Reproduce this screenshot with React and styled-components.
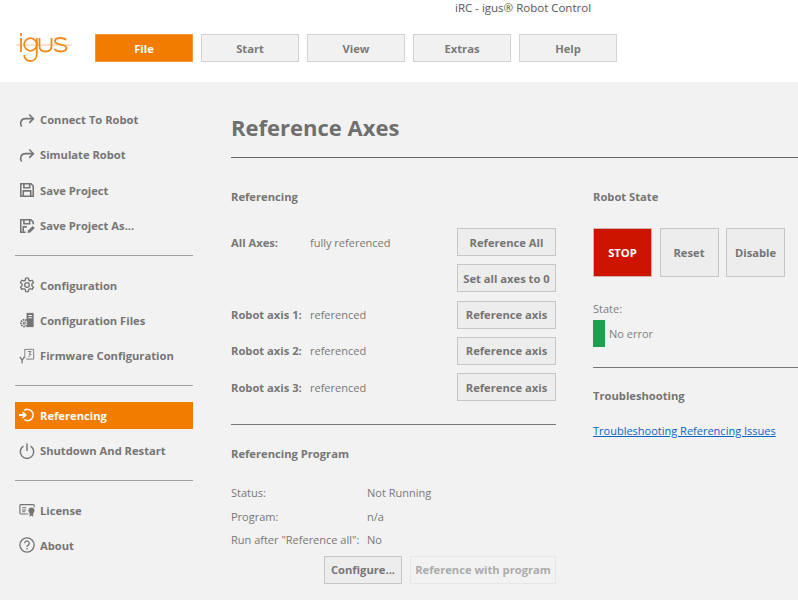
import React from "react"
import styled, { createGlobalStyle } from "styled-components"

const GlobalStyle = createGlobalStyle`
  html, body {
    margin: 0;
    padding: 0;
    height: 100%;
    overflow: hidden;
    background: #f2f2f2;
    font-family: "Open Sans", "Noto Sans", sans-serif;
  }
  * { box-sizing: border-box; }
`

const Page = styled.div`
  width: 798px;
  height: 600px;
  overflow: hidden;
  display: flex;
  flex-direction: column;
`

const Header = styled.header`
  height: 82px;
  flex: none;
  background: #fff;
  display: flex;
  flex-direction: column;
`

const AppTitle = styled.div`
  height: 32px;
  padding: 0 0 0 455px;
  font-size: 11.5px;
  line-height: 15px;
  color: #555;
`

const TabRow = styled.div`
  display: flex;
  align-items: center;
  padding-left: 16px;
`

const Logo = styled.svg`
  width: 56px;
  height: 32px;
  margin-right: 23px;
  flex: none;
`

const Tabs = styled.nav`
  display: flex;
  gap: 8px;
`

const Tab = styled.div`
  width: 98px;
  height: 28px;
  display: flex;
  align-items: center;
  justify-content: center;
  font-size: 11.2px;
  font-weight: 700;
  color: ${(p) => (p.$active ? "#fff" : "#7a7a7a")};
  background: ${(p) => (p.$active ? "#f27c00" : "#f1f1f1")};
  border: 1px solid ${(p) => (p.$active ? "#f59a3c" : "#d2d2d2")};
`

const Body = styled.div`
  flex: 1;
  display: flex;
`

const Sidebar = styled.aside`
  width: 178px;
  margin-left: 15px;
  padding-top: 24px;
  flex: none;
  display: flex;
  flex-direction: column;
`

const NavItem = styled.div`
  height: 27px;
  margin-bottom: 8.4px;
  display: flex;
  align-items: center;
  padding-left: 4px;
  gap: 5px;
  font-size: 11.2px;
  font-weight: 700;
  white-space: nowrap;
  color: ${(p) => (p.$active ? "#fff" : "#757575")};
  background: ${(p) => (p.$active ? "#f27c00" : "transparent")};
  svg { flex: none; }
`

const NavRule = styled.hr`
  border: 0;
  height: 1px;
  background: #a0a0a0;
  margin: 7px 0 16px;
`

const Main = styled.main`
  flex: 1;
  padding: 31px 0 0 38px;
  min-width: 0;
`

const Title = styled.h1`
  margin: 0;
  height: 44px;
  font-size: 22px;
  line-height: 28px;
  font-weight: 700;
  color: #6f6f6f;
`

const TitleRule = styled.div`
  height: 1px;
  background: #666;
`

const Columns = styled.div`
  display: flex;
  padding-top: 30px;
`

const LeftColumn = styled.section`
  width: 325px;
  flex: none;
`

const RightColumn = styled.section`
  flex: 1;
  margin-left: 37px;
`

const SectionTitle = styled.h2`
  margin: 0;
  font-size: 11.2px;
  line-height: 18px;
  font-weight: 700;
  color: #757575;
`

const AxisList = styled.div`
  margin-top: 22px;
  display: flex;
  flex-direction: column;
  gap: 8.3px;
`

const AxisRow = styled.div`
  height: 28px;
  display: flex;
  align-items: center;
  font-size: 11px;
  color: #777;
`

const AxisLabel = styled.span`
  width: 79px;
  flex: none;
  font-size: 11.2px;
  font-weight: 700;
  white-space: nowrap;
`

const AxisValue = styled.span`
  flex: 1;
`

const Button = styled.button`
  width: ${(p) => p.$width || 99}px;
  height: ${(p) => p.$height || 28}px;
  padding: 0;
  flex: none;
  font-family: inherit;
  font-size: 11.2px;
  font-weight: 700;
  color: ${(p) => (p.$disabled ? "#ababab" : "#757575")};
  background: ${(p) => (p.$disabled ? "#f2f2f2" : "#ededed")};
  border: 1px solid ${(p) => (p.$disabled ? "#e6e6e6" : "#c6c6c6")};
`

const LeftRule = styled.div`
  height: 1px;
  margin-top: 23px;
  background: #777;
`

const ProgramTitle = styled(SectionTitle)`
  margin-top: 19.5px;
`

const ProgramGrid = styled.dl`
  margin: 18.5px 0 0;
  display: grid;
  grid-template-columns: 136px 1fr;
  grid-auto-rows: 23.5px;
  font-size: 11px;
  align-items: center;
  color: #777;
  dt, dd { margin: 0; white-space: nowrap; }
`

const ProgramActions = styled.div`
  display: flex;
  justify-content: flex-end;
  gap: 8px;
  margin-top: 4px;
`

const StateButtons = styled.div`
  display: flex;
  gap: 7.5px;
  margin-top: 22px;
`

const StopButton = styled(Button)`
  color: #fff;
  background: #cc1400;
  border-color: #d8b0a8;
`

const StateLabel = styled.div`
  margin-top: 24px;
  font-size: 11px;
  line-height: 16px;
  color: #808080;
`

const StateRow = styled.div`
  margin-top: 3px;
  display: flex;
  align-items: center;
  gap: 4px;
  font-size: 11px;
  color: #808080;
`

const StateLamp = styled.span`
  width: 12px;
  height: 27px;
  background: #1f9e4f;
`

const RightRule = styled.div`
  height: 1px;
  margin-top: 20px;
  background: #777;
`

const TroubleTitle = styled(SectionTitle)`
  margin-top: 19px;
`

const TroubleLink = styled.a`
  display: block;
  margin-top: 18px;
  font-size: 11px;
  line-height: 16px;
  color: #0a66c2;
  text-decoration: underline;
  white-space: nowrap;
`

const icon = { width: 16, height: 16, viewBox: "0 0 18 18", fill: "none", stroke: "currentColor", strokeWidth: 1.8 }

const ForwardIcon = () => (
  <svg {...icon}>
    <path d="M3 16.500C.5 12.500 2 7.500 7.500 7.500H16" />
    <path d="M11.500 2.800 16.200 7.500 11.500 12.200" />
  </svg>
)
const SaveIcon = () => (
  <svg {...icon}>
    <path d="M2 2h11.500L16 4.500V16H2z" />
    <path d="M5.500 2v4.500h6.500V2M4.800 16v-6h8.400v6" />
  </svg>
)
const SaveAsIcon = () => (
  <svg {...icon}>
    <path d="M7.500 16H2V2h11.500L16 4.500v2.500" />
    <path d="M5.500 2v4.500h6.500V2M4.800 16v-6h4" />
    <path d="M9.500 17l.7-3 5.200-5 2.400 2.300-5.200 5z" fill="currentColor" stroke="none" />
  </svg>
)
const GearIcon = () => (
  <svg {...icon} strokeWidth="1.500">
    <circle cx="9" cy="9" r="2.600" />
    <path d="M7.500 1.200h3l.5 2.400 1.500.8 2.300-.8 1.500 2.600-1.800 1.700v1.800l1.800 1.700-1.500 2.600-2.300-.8-1.500.8-.5 2.400h-3L7 14.000l-1.500-.8-2.300.8-1.500-2.600 1.800-1.700V8L1.700 6.200l1.500-2.600 2.300.8L7 3.600z" />
  </svg>
)
const ConfigFilesIcon = () => (
  <svg {...icon} strokeWidth="1.200">
    <path d="M8.500 1h8v16h-8z" fill="currentColor" stroke="none" />
    <path d="M10.500 4h4M10.500 6.500h4" stroke="#f2f2f2" />
    <circle cx="6" cy="12.500" r="3.800" fill="#f2f2f2" strokeWidth="2" strokeDasharray="1.800 0.800" />
    <circle cx="6" cy="12.500" r="1.200" />
  </svg>
)
const FirmwareIcon = () => (
  <svg {...icon} strokeWidth="1">
    <path d="M6.500 11.500V1.500h10v11H8" />
    <path d="M10 4h3.500l-2.200 3h2.200l-3 3.500" />
    <path d="M1 10l2.500 4L6 10M3.500 14v3.500" strokeWidth="1.400" />
  </svg>
)
const ReferencingIcon = () => (
  <svg {...icon} strokeWidth="1.800">
    <path d="M6 3.800A6.300 6.300 0 1 1 6 14.200" />
    <path d="M0 9h7M4 5.700 7.500 9 4 12.300" strokeWidth="2" />
  </svg>
)
const PowerIcon = () => (
  <svg {...icon} strokeWidth="1.600">
    <path d="M9 .5V9" />
    <path d="M5 3.500a7.500 7.500 0 1 0 8 0" />
  </svg>
)
const LicenseIcon = () => (
  <svg {...icon} strokeWidth="1.300">
    <path d="M10.500 13.500H2a1 1 0 0 1-1-1V4a1 1 0 0 1 1-1h14a1 1 0 0 1 1 1v2" />
    <path d="M3.500 6.500h4.500M3.500 9h4.500M3.500 11h3.500" />
    <circle cx="14" cy="9.500" r="3.400" fill="currentColor" stroke="none" />
    <path d="M12 12v4.500l2-1.200 2 1.200V12" fill="currentColor" stroke="none" />
  </svg>
)
const HelpIcon = () => (
  <svg {...icon} strokeWidth="1.500">
    <circle cx="9" cy="9" r="8" />
    <path d="M6.500 7a2.500 2.500 0 1 1 3.800 2.100c-.9.500-1.300 1-1.300 2.100" />
    <path d="M9 12.500v1.500" />
  </svg>
)

const IgusLogo = () => (
  <Logo viewBox="0 0 56 32" fill="none" stroke="#f08a1d" strokeWidth="1.800">
    <path d="M-1 13h58" strokeWidth="0.700" stroke="#f4b070" />
    <path d="M5 6v14M5 1v3" />
    <ellipse cx="14.500" cy="12.500" rx="6.300" ry="6.300" />
    <path d="M20.800 6v16c0 4.500-3 7-6.300 7s-6.300-2.500-6.300-6" />
    <path d="M23.500 6v8c0 3.500 2.500 5.500 6 5.500s6-2 6-5.500V6" />
    <path d="M50 8c-1-1.500-3.500-2-5.500-2-3 0-5.500 1.200-5.500 3.300 0 4.500 11.500 2 11.500 6.500 0 2.500-2.800 3.700-5.800 3.700-2.500 0-5-1-6.200-2.500" />
  </Logo>
)

const nav = [
  [
    { label: "Connect To Robot", Icon: ForwardIcon },
    { label: "Simulate Robot", Icon: ForwardIcon },
    { label: "Save Project", Icon: SaveIcon },
    { label: "Save Project As...", Icon: SaveAsIcon },
  ],
  [
    { label: "Configuration", Icon: GearIcon },
    { label: "Configuration Files", Icon: ConfigFilesIcon },
    { label: "Firmware Configuration", Icon: FirmwareIcon },
  ],
  [
    { label: "Referencing", Icon: ReferencingIcon, active: true },
    { label: "Shutdown And Restart", Icon: PowerIcon },
  ],
  [
    { label: "License", Icon: LicenseIcon },
    { label: "About", Icon: HelpIcon },
  ],
]

const axes = ["Robot axis 1:", "Robot axis 2:", "Robot axis 3:"]

export default function App() {
  return (
    <Page>
      <GlobalStyle />
      <Header>
        <AppTitle>iRC - igus® Robot Control</AppTitle>
        <TabRow>
          <IgusLogo />
          <Tabs>
            <Tab $active>File</Tab>
            <Tab>Start</Tab>
            <Tab>View</Tab>
            <Tab>Extras</Tab>
            <Tab>Help</Tab>
          </Tabs>
        </TabRow>
      </Header>
      <Body>
        <Sidebar>
          {nav.map((group, i) => (
            <React.Fragment key={i}>
              {i > 0 && <NavRule />}
              {group.map(({ label, Icon, active }) => (
                <NavItem key={label} $active={active}>
                  <Icon />
                  {label}
                </NavItem>
              ))}
            </React.Fragment>
          ))}
        </Sidebar>
        <Main>
          <Title>Reference Axes</Title>
          <TitleRule />
          <Columns>
            <LeftColumn>
              <SectionTitle>Referencing</SectionTitle>
              <AxisList>
                <AxisRow>
                  <AxisLabel>All Axes:</AxisLabel>
                  <AxisValue>fully referenced</AxisValue>
                  <Button>Reference All</Button>
                </AxisRow>
                <AxisRow>
                  <AxisLabel />
                  <AxisValue />
                  <Button>Set all axes to 0</Button>
                </AxisRow>
                {axes.map((axis) => (
                  <AxisRow key={axis}>
                    <AxisLabel>{axis}</AxisLabel>
                    <AxisValue>referenced</AxisValue>
                    <Button>Reference axis</Button>
                  </AxisRow>
                ))}
              </AxisList>
              <LeftRule />
              <ProgramTitle>Referencing Program</ProgramTitle>
              <ProgramGrid>
                <dt>Status:</dt>
                <dd>Not Running</dd>
                <dt>Program:</dt>
                <dd>n/a</dd>
                <dt>Run after "Reference all":</dt>
                <dd>No</dd>
              </ProgramGrid>
              <ProgramActions>
                <Button $width={78}>Configure...</Button>
                <Button $width={146} $disabled>Reference with program</Button>
              </ProgramActions>
            </LeftColumn>
            <RightColumn>
              <SectionTitle>Robot State</SectionTitle>
              <StateButtons>
                <StopButton $width={59} $height={49}>STOP</StopButton>
                <Button $width={59} $height={49}>Reset</Button>
                <Button $width={59} $height={49}>Disable</Button>
              </StateButtons>
              <StateLabel>State:</StateLabel>
              <StateRow>
                <StateLamp />
                No error
              </StateRow>
              <RightRule />
              <TroubleTitle>Troubleshooting</TroubleTitle>
              <TroubleLink href="#">Troubleshooting Referencing Issues</TroubleLink>
            </RightColumn>
          </Columns>
        </Main>
      </Body>
    </Page>
  )
}
